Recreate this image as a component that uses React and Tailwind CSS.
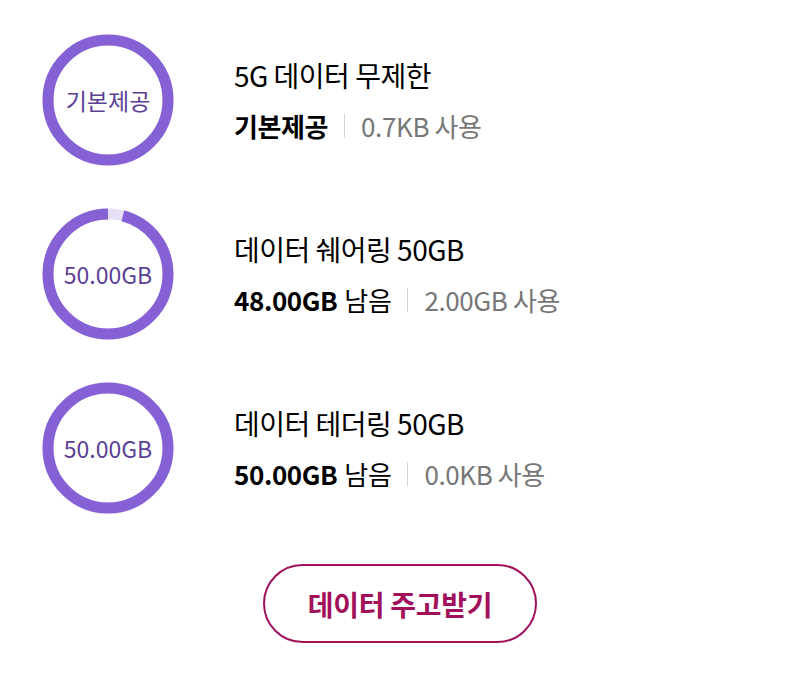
import React from "react";

const rows = [
  { label: "기본제공", title: "5G 데이터 무제한", main: "기본제공", suffix: "", used: "0.7KB 사용", pct: 0 },
  { label: "50.00GB", title: "데이터 쉐어링 50GB", main: "48.00GB", suffix: "남음", used: "2.00GB 사용", pct: 4 },
  { label: "50.00GB", title: "데이터 테더링 50GB", main: "50.00GB", suffix: "남음", used: "0.0KB 사용", pct: 0 },
];

function Ring({ label, pct }) {
  const r = 60;
  const c = 2 * Math.PI * r;
  const used = (c * pct) / 100;
  return (
    <div className="relative w-[132px] h-[132px] shrink-0">
      <svg width="132" height="132" viewBox="0 0 132 132">
        <circle cx="66" cy="66" r={r} fill="none" stroke="#e7e0f6" strokeWidth="11" />
        <circle
          cx="66"
          cy="66"
          r={r}
          fill="none"
          stroke="#8561d5"
          strokeWidth="11"
          strokeDasharray={`${c - used} ${c}`}
          strokeDashoffset={-used}
          transform="rotate(-90 66 66)"
        />
      </svg>
      <div className="absolute inset-0 flex items-center justify-center text-[23px] text-[#5b4095]">
        {label}
      </div>
    </div>
  );
}

export default function App() {
  return (
    <div
      className="w-[800px] h-[694px] bg-white pt-[34px]"
      style={{ fontFamily: '"Noto Sans CJK KR", "Noto Sans", sans-serif' }}
    >
      <div className="flex flex-col gap-[42px] pl-[42px]">
        {rows.map((row, i) => (
          <div key={i} className="flex items-center">
            <Ring label={row.label} pct={row.pct} />
            <div className="ml-[60px] flex flex-col gap-[14px] text-black">
              <div className="text-[28px] leading-[38px] tracking-[-0.5px]">{row.title}</div>
              <div className="flex items-center text-[26px] leading-[36px] tracking-[-0.4px]">
                <span className="font-bold">{row.main}</span>
                {row.suffix && <span className="ml-[7px]">{row.suffix}</span>}
                <span className="mx-[16px] w-[1px] h-[24px] bg-[#d6d6d6]" />
                <span className="text-[#777777]">{row.used}</span>
              </div>
            </div>
          </div>
        ))}
      </div>
      <div className="flex justify-center mt-[50px]">
        <button className="w-[274px] h-[79px] rounded-full border-2 border-[#a2105b] text-[#a2105b] text-[28px] font-bold tracking-[-0.3px]">
          데이터 주고받기
        </button>
      </div>
    </div>
  );
}
